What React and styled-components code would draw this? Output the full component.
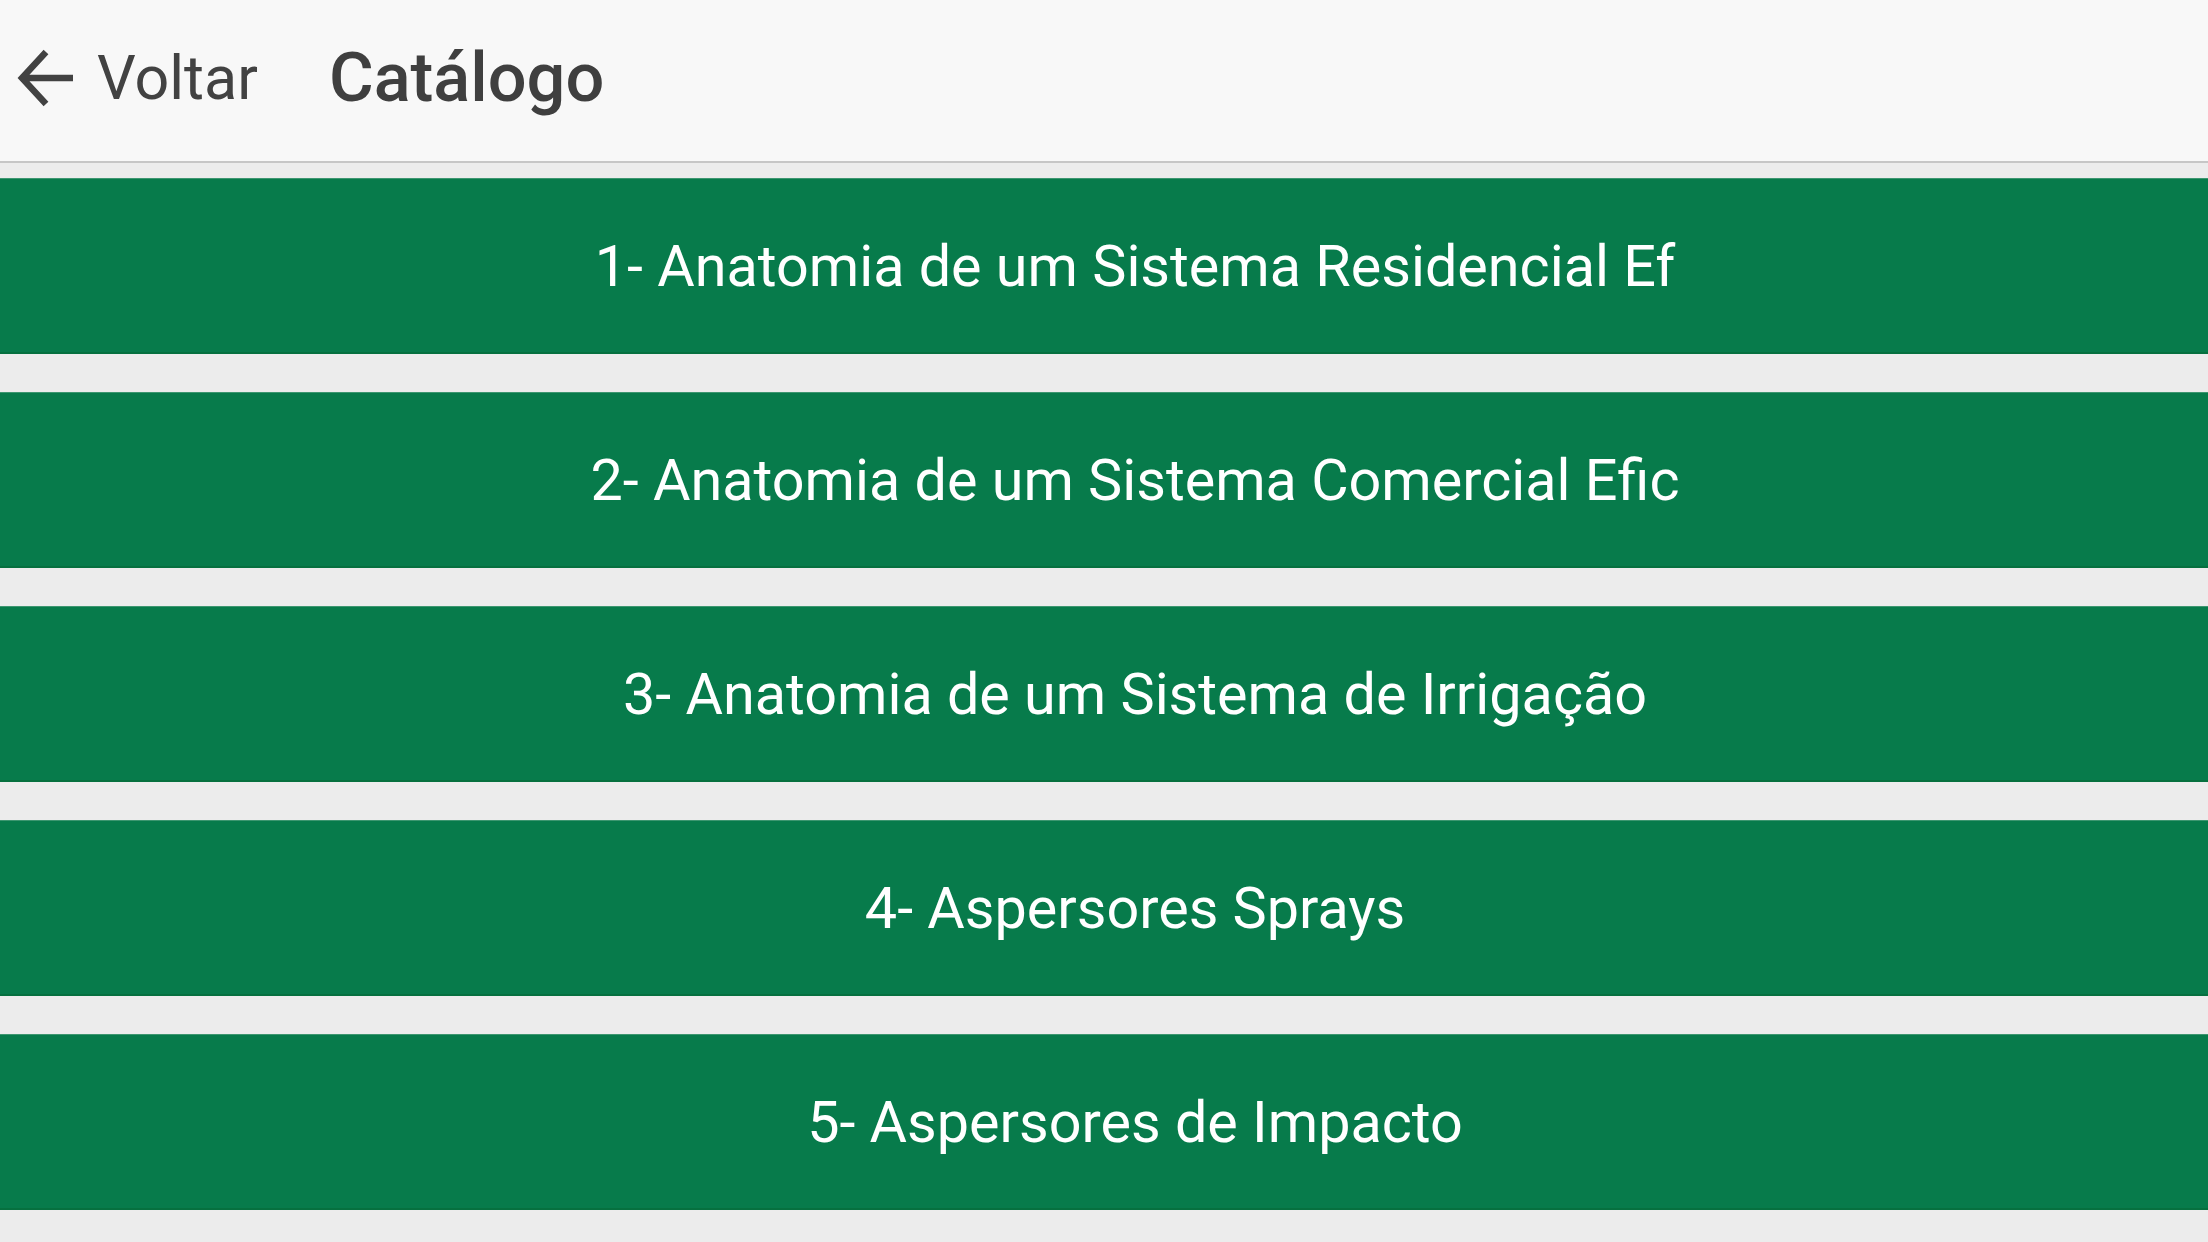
import React from "react";
import styled, { createGlobalStyle } from "styled-components";

const Global = createGlobalStyle`
  html, body { margin: 0; padding: 0; background: #ececec; }
  body { font-family: Roboto, "Noto Sans", Arial, sans-serif; }
  * { box-sizing: border-box; }
`;

const Page = styled.div`
  width: 2208px;
  height: 1242px;
  overflow: hidden;
  background: #ececec;
  display: flex;
  flex-direction: column;
`;

const Header = styled.header`
  height: 163px;
  flex: none;
  background: #f8f8f8;
  border-bottom: 2px solid #c6c6c6;
  display: flex;
  align-items: center;
  padding: 0 0 6px 17px;
  color: #424242;
`;

const BackButton = styled.button`
  display: flex;
  align-items: center;
  gap: 22px;
  border: none;
  background: transparent;
  padding: 0;
  color: #424242;
  font-family: Roboto, sans-serif;
  font-size: 61px;
  font-weight: 400;
  cursor: pointer;
`;

const Title = styled.h1`
  margin: 0 0 0 71px;
  font-family: Roboto, sans-serif;
  font-size: 68.5px;
  font-weight: 500;
  color: #3f3f3f;
`;

const List = styled.div`
  display: flex;
  flex-direction: column;
  gap: 38px;
  padding-top: 15px;
`;

const Item = styled.button`
  height: 176px;
  width: 100%;
  border: none;
  background: #077b4b;
  box-shadow: inset 0 -2px 0 #06703f, inset 0 1px 0 #3d9670;
  color: #ffffff;
  font-family: Roboto, sans-serif;
  font-size: 57.5px;
  font-weight: 400;
  display: flex;
  align-items: center;
  justify-content: center;
  padding: 0 0 0 62px;
  white-space: nowrap;
  cursor: pointer;
`;

const ArrowIcon = () => (
  <svg width="58" height="60" viewBox="0 0 58 60" fill="none">
    <path
      d="M56 30H6M29 4L5 30L29 56"
      stroke="#424242"
      strokeWidth="6.5"
      strokeLinecap="butt"
      strokeLinejoin="miter"
    />
  </svg>
);

const items = [
  "1- Anatomia de um Sistema Residencial Ef",
  "2- Anatomia de um Sistema Comercial Efic",
  "3- Anatomia de um Sistema de Irrigação",
  "4- Aspersores Sprays",
  "5- Aspersores de Impacto",
];

export default function App() {
  return (
    <>
      <Global />
      <Page>
        <Header>
          <BackButton>
            <ArrowIcon />
            Voltar
          </BackButton>
          <Title>Catálogo</Title>
        </Header>
        <List>
          {items.map((t) => (
            <Item key={t}>{t}</Item>
          ))}
        </List>
      </Page>
    </>
  );
}
